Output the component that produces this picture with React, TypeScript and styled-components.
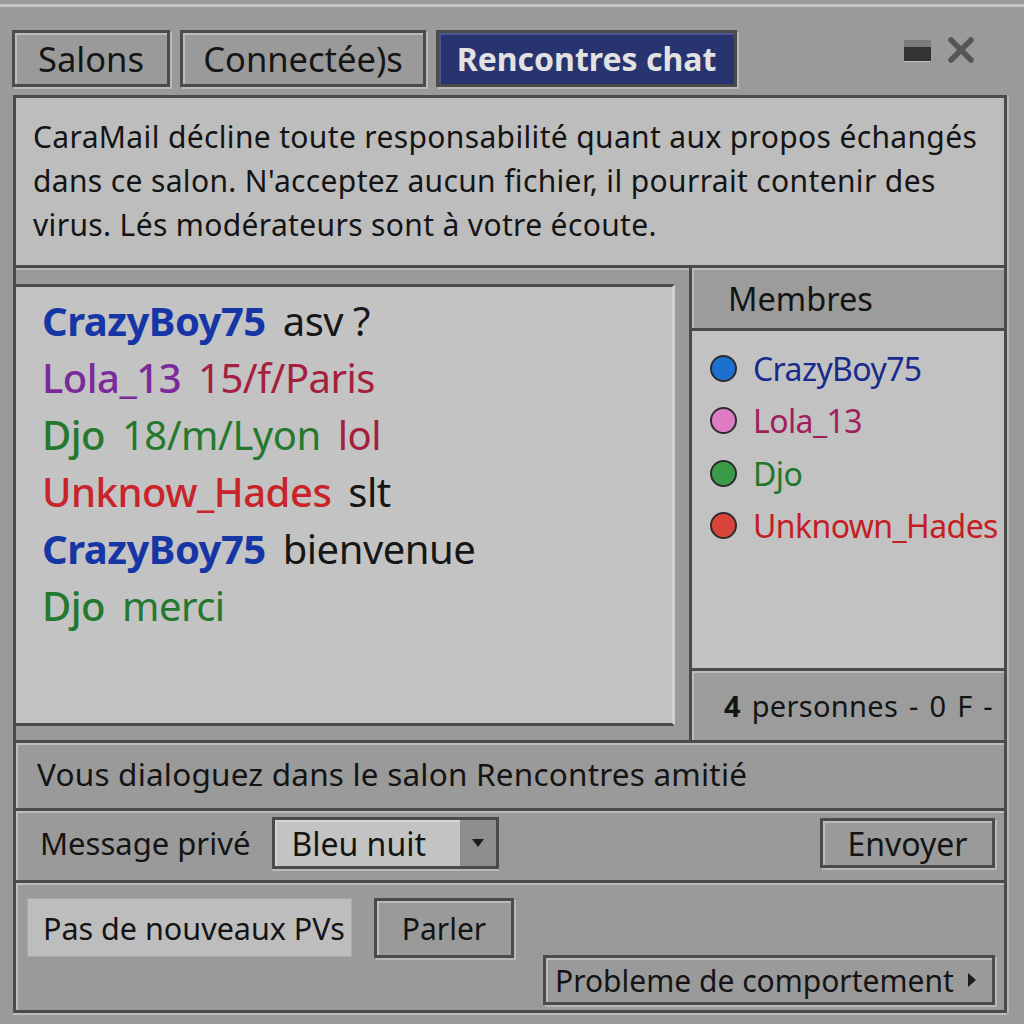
import React from "react";
import styled, { createGlobalStyle, css } from "styled-components";

const GlobalStyle = createGlobalStyle`
  html, body {
    margin: 0;
    padding: 0;
    background: #999999;
  }
  * {
    box-sizing: border-box;
  }
`;

const font = `"Noto Sans", "DejaVu Sans", sans-serif`;
const dark = "#4b4b4b";
const gray = "#9a9a9a";

const Page = styled.div`
  width: 1024px;
  height: 1024px;
  overflow: hidden;
  background: ${gray};
  font-family: ${font};
  color: #141414;
  padding-top: 4px;

  &::before {
    content: "";
    display: block;
    height: 3px;
    background: #c4c4c4;
  }
`;

const TitleBar = styled.div`
  display: flex;
  align-items: flex-start;
  gap: 10px;
  padding: 23px 0 0 12px;
  height: 88px;
`;

const Tab = styled.div<{ $w: number; $active?: boolean }>`
  width: ${(p) => p.$w}px;
  height: 57px;
  display: flex;
  align-items: center;
  justify-content: center;
  border: 3px solid ${dark};
  box-shadow: inset 2px 2px 0 #bcbcbc, 2px 2px 0 #bababa;
  background: ${gray};
  font-size: 34.5px;
  color: #151515;
  white-space: nowrap;

  ${(p) =>
    p.$active &&
    css`
      background: #28346f;
      color: #e2e2e2;
      font-weight: 700;
      font-size: 32px;
      box-shadow: inset 2px 2px 0 #4a5590, 2px 2px 0 #bababa;
    `}
`;

const Controls = styled.div`
  margin-left: auto;
  margin-right: 49px;
  margin-top: 6px;
  display: flex;
  align-items: center;
  gap: 16px;
`;

const Minimize = styled.div`
  width: 27px;
  height: 21px;
  background: linear-gradient(#7c7c7c 0 7px, #333 7px);
  box-shadow: 0 1px 0 #bdbdbd;
`;

const Frame = styled.div`
  margin-left: 13px;
  width: 994px;
  border: 3px solid ${dark};
  box-shadow: 0 2px 0 #bdbdbd, 2px 0 0 #b5b5b5;
  display: flex;
  flex-direction: column;
`;

const Disclaimer = styled.div`
  height: 167px;
  background: #bdbdbd;
  padding: 17px 17px 0;
  font-size: 30px;
  line-height: 44px;
  letter-spacing: 0.35px;
  white-space: nowrap;
`;

const Middle = styled.div`
  height: 475px;
  border-top: 3px solid ${dark};
  display: grid;
  grid-template-columns: 673px 1fr;
`;

const ChatPanel = styled.div`
  padding: 16px 14px 14px 0;
  box-shadow: inset 0 2px 0 #b8b8b8;
`;

const ChatBox = styled.div`
  height: 100%;
  background: #c3c3c3;
  border-top: 3px solid ${dark};
  border-bottom: 3px solid ${dark};
  border-right: 3px solid #d0d0d0;
  padding: 5px 26px;
`;

const ChatLine = styled.div`
  height: 57px;
  display: flex;
  align-items: center;
  gap: 17px;
  font-size: 40px;
  white-space: nowrap;
`;

const Nick = styled.span<{ $color: string; $bold?: boolean }>`
  color: ${(p) => p.$color};
  font-weight: ${(p) => (p.$bold ? 700 : 500)};
  letter-spacing: -0.5px;
`;

const Said = styled.span<{ $color: string }>`
  color: ${(p) => p.$color};
  letter-spacing: -0.5px;
`;

const MembersPanel = styled.div`
  border-left: 3px solid ${dark};
  display: flex;
  flex-direction: column;
`;

const MembersHeader = styled.div`
  height: 63px;
  border-bottom: 3px solid ${dark};
  background: #9c9c9c;
  box-shadow: inset 2px 2px 0 #bcbcbc;
  display: flex;
  align-items: center;
  padding-left: 36px;
  font-size: 32.5px;
`;

const MemberList = styled.div`
  flex: 1;
  background: #c2c2c2;
  padding: 11px 0 0 18px;
`;

const MemberRow = styled.div<{ $color: string }>`
  height: 52.5px;
  display: flex;
  align-items: center;
  gap: 16px;
  font-size: 32px;
  color: ${(p) => p.$color};
  letter-spacing: -0.6px;
`;

const Dot = styled.span<{ $color: string }>`
  width: 27px;
  height: 27px;
  border-radius: 50%;
  background: ${(p) => p.$color};
  border: 2px solid #2c2c2c;
  flex-shrink: 0;
`;

const MembersFooter = styled.div`
  height: 72px;
  border-top: 3px solid ${dark};
  background: #9c9c9c;
  box-shadow: inset 2px 2px 0 #bcbcbc;
  display: flex;
  align-items: center;
  justify-content: flex-end;
  padding-right: 11px;
  font-size: 29px;
  letter-spacing: 0.3px;
  word-spacing: 3px;
`;

const Section = styled.div<{ $h: number }>`
  height: ${(p) => p.$h}px;
  border-top: 3px solid ${dark};
  box-shadow: inset 2px 2px 0 #bdbdbd;
`;

const StatusBar = styled(Section)`
  display: flex;
  align-items: center;
  padding: 0 0 4px 21px;
  font-size: 31.5px;
  letter-spacing: 0.2px;
  white-space: nowrap;
`;

const MessageRow = styled(Section)`
  display: flex;
  align-items: center;
  padding: 0 9px 5px 24px;
  font-size: 31px;
`;

const Label = styled.span`
  margin-right: 22px;
  white-space: nowrap;
`;

const Select = styled.div`
  width: 227px;
  height: 52px;
  display: flex;
  border: 3px solid ${dark};
  box-shadow: 0 2px 0 #b8b8b8;
  background: #c3c3c3;
`;

const SelectValue = styled.div`
  flex: 1;
  display: flex;
  align-items: center;
  padding-left: 16px;
  font-size: 32px;
  box-shadow: inset 2px 2px 0 #d6d6d6;
`;

const SelectArrow = styled.div`
  width: 36px;
  background: #8e8e8e;
  display: flex;
  align-items: center;
  justify-content: center;

  &::after {
    content: "";
    border-left: 6px solid transparent;
    border-right: 6px solid transparent;
    border-top: 8px solid #1c1c1c;
  }
`;

const Button = styled.div<{ $w: number; $h?: number }>`
  width: ${(p) => p.$w}px;
  height: ${(p) => p.$h ?? 50}px;
  border: 3px solid ${dark};
  box-shadow: inset 2px 2px 0 #bcbcbc, 2px 2px 0 #b8b8b8;
  background: ${gray};
  display: flex;
  align-items: center;
  justify-content: center;
  font-size: 30px;
  white-space: nowrap;
`;

const SendButton = styled(Button)`
  margin-left: auto;
  font-size: 32px;
`;

const BottomArea = styled(Section)`
  display: flex;
  flex-direction: column;
  padding: 15px 9px 0 11px;
`;

const ActionRow = styled.div`
  display: flex;
  gap: 22px;
`;

const NoticeBox = styled.div`
  width: 325px;
  height: 59px;
  background: #bdbdbd;
  border: 1px solid #a8a8a8;
  display: flex;
  align-items: center;
  padding-left: 15px;
  font-size: 30.5px;
  white-space: nowrap;
`;

const ReportButton = styled(Button)`
  align-self: flex-end;
  margin-top: -3px;
  justify-content: flex-start;
  padding-left: 9px;
  gap: 14px;

  &::after {
    content: "";
    border-top: 7px solid transparent;
    border-bottom: 7px solid transparent;
    border-left: 8px solid #1c1c1c;
  }
`;

const chat = [
  { nick: "CrazyBoy75", nc: "#1636a6", bold: true, parts: [{ t: "asv ?", c: "#161616" }] },
  { nick: "Lola_13", nc: "#7b2a9c", parts: [{ t: "15/f/Paris", c: "#a4203e" }] },
  {
    nick: "Djo",
    nc: "#25792f",
    parts: [
      { t: "18/m/Lyon", c: "#25792f" },
      { t: "lol", c: "#a4203e" },
    ],
  },
  { nick: "Unknow_Hades", nc: "#c8242a", parts: [{ t: "slt", c: "#161616" }] },
  { nick: "CrazyBoy75", nc: "#1636a6", bold: true, parts: [{ t: "bienvenue", c: "#161616" }] },
  { nick: "Djo", nc: "#25792f", parts: [{ t: "merci", c: "#25792f" }] },
];

const members = [
  { name: "CrazyBoy75", color: "#1a2a8c", dot: "#1d6fd0" },
  { name: "Lola_13", color: "#a01e5c", dot: "#e07cc4" },
  { name: "Djo", color: "#23772d", dot: "#3a9a48" },
  { name: "Unknown_Hades", color: "#c41e24", dot: "#d8443a" },
];

export default function App() {
  return (
    <Page>
      <GlobalStyle />
      <TitleBar>
        <Tab $w={158}>Salons</Tab>
        <Tab $w={246}>Connectée)s</Tab>
        <Tab $w={301} $active>
          Rencontres chat
        </Tab>
        <Controls>
          <Minimize />
          <svg width="28" height="28" viewBox="0 0 28 28">
            <path d="M4 4 L24 24 M24 4 L4 24" stroke="#555" strokeWidth="5.5" strokeLinecap="round" />
          </svg>
        </Controls>
      </TitleBar>

      <Frame>
        <Disclaimer>
          CaraMail décline toute responsabilité quant aux propos échangés
          <br />
          dans ce salon. N'acceptez aucun fichier, il pourrait contenir des
          <br />
          virus. Lés modérateurs sont à votre écoute.
        </Disclaimer>

        <Middle>
          <ChatPanel>
            <ChatBox>
              {chat.map((line, i) => (
                <ChatLine key={i}>
                  <Nick $color={line.nc} $bold={line.bold}>
                    {line.nick}
                  </Nick>
                  {line.parts.map((p, j) => (
                    <Said key={j} $color={p.c}>
                      {p.t}
                    </Said>
                  ))}
                </ChatLine>
              ))}
            </ChatBox>
          </ChatPanel>

          <MembersPanel>
            <MembersHeader>Membres</MembersHeader>
            <MemberList>
              {members.map((m) => (
                <MemberRow key={m.name} $color={m.color}>
                  <Dot $color={m.dot} />
                  {m.name}
                </MemberRow>
              ))}
            </MemberList>
            <MembersFooter>
              <b>4</b>&nbsp;personnes - 0 F -
            </MembersFooter>
          </MembersPanel>
        </Middle>

        <StatusBar $h={68}>Vous dialoguez dans le salon Rencontres amitié</StatusBar>

        <MessageRow $h={72}>
          <Label>Message privé</Label>
          <Select>
            <SelectValue>Bleu nuit</SelectValue>
            <SelectArrow />
          </Select>
          <SendButton $w={175}>Envoyer</SendButton>
        </MessageRow>

        <BottomArea $h={130}>
          <ActionRow>
            <NoticeBox>Pas de nouveaux PVs</NoticeBox>
            <Button $w={140} $h={60}>
              Parler
            </Button>
          </ActionRow>
          <ReportButton $w={452}>Probleme de comportement</ReportButton>
        </BottomArea>
      </Frame>
    </Page>
  );
}
